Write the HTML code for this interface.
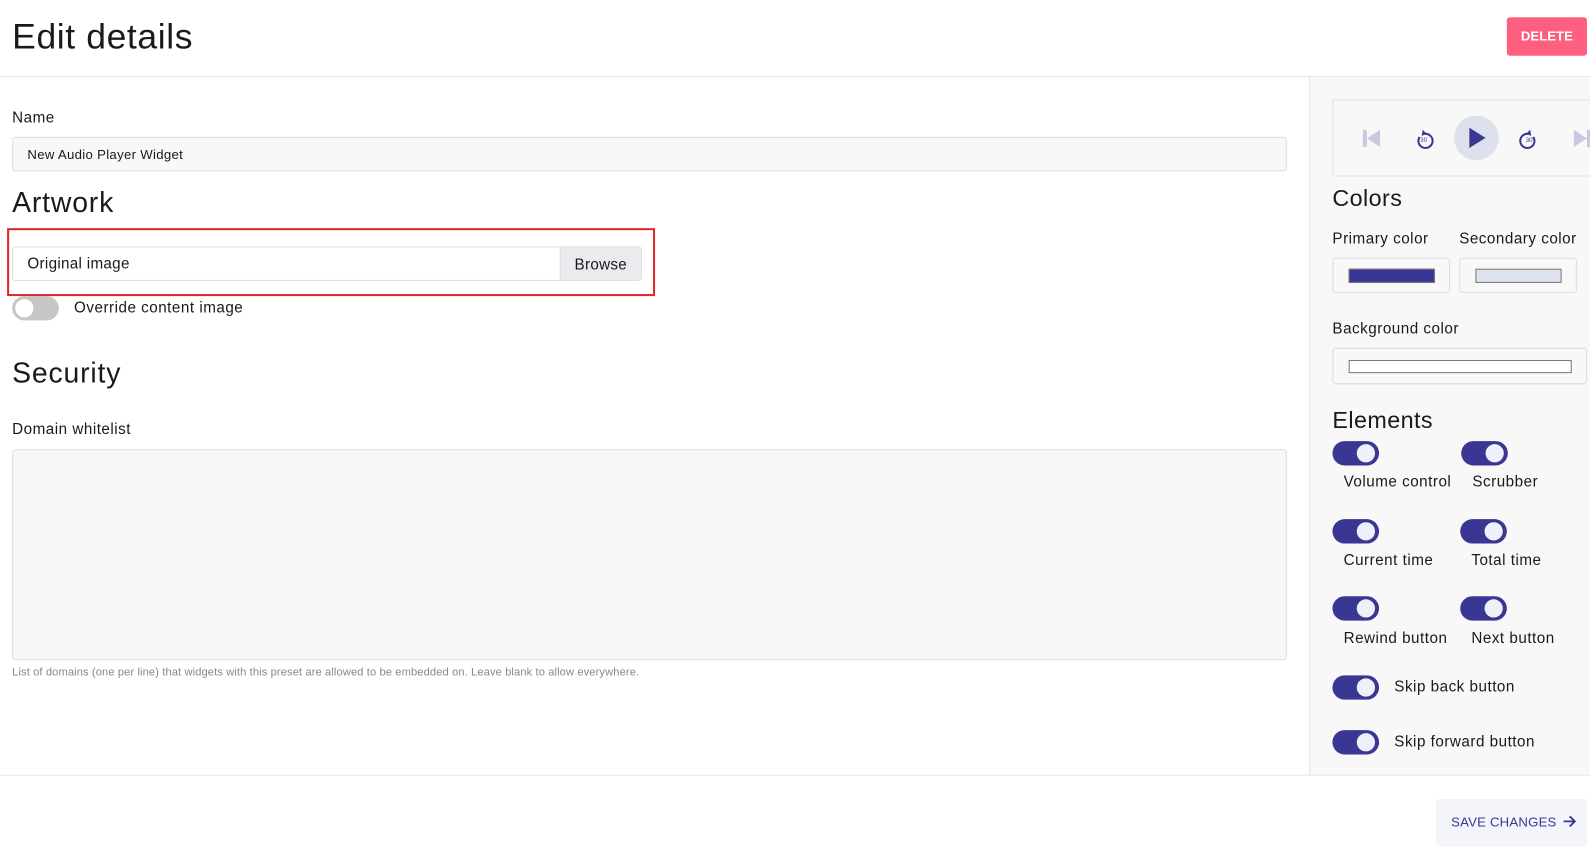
<!DOCTYPE html>
<html><head><style>
*{box-sizing:border-box;margin:0;padding:0}
html,body{width:1590px;height:847px;overflow:hidden;background:#fff}
#w{position:absolute;left:0;top:0;width:1568px;height:836px;transform:scale(1.01403);transform-origin:0 0;font-family:"Liberation Sans",sans-serif;color:#1a1a1a}
.a{position:absolute}
h1{position:absolute;left:12px;top:17px;font-size:35px;font-weight:normal;letter-spacing:0.6px}
.lbl{font-size:15px;letter-spacing:0.5px}
.h2{font-size:28px;letter-spacing:0.8px}
.inp{border:1px solid #dcdcdc;border-radius:3px;background:#f8f8f8}
.tg{position:absolute;width:46px;height:24px;border-radius:12px;background:#3a3694}
.tg::after{content:"";position:absolute;right:4px;top:3px;width:18px;height:18px;border-radius:50%;background:#eef0fa}
.el{position:absolute;font-size:15px;letter-spacing:0.5px}
</style></head><body><div id="w">
<h1>Edit details</h1>
<div class="a" style="left:1486px;top:17px;width:79px;height:38px;background:#fe5f7e;border-radius:3px;color:#fff;font-size:13px;font-weight:bold;line-height:38px;text-align:center">DELETE</div>
<div class="a" style="left:0;top:75px;width:1568px;height:1px;background:#e6e6e6"></div>
<div class="a" style="left:1291px;top:76px;width:277px;height:688px;background:#f8f8f8;border-left:1px solid #e6e6e6"></div>
<div class="a" style="left:0;top:764px;width:1568px;height:1px;background:#e6e6e6"></div>

<div class="a lbl" style="left:12px;top:108px">Name</div>
<div class="a inp" style="left:12px;top:135px;width:1257px;height:34px;font-size:13px;line-height:34px;padding-left:14px;letter-spacing:0.3px">New Audio Player Widget</div>
<div class="a h2" style="left:12px;top:184px">Artwork</div>
<div class="a" style="left:7px;top:225px;width:639px;height:67px;border:2px solid #e0262b"></div>
<div class="a" style="left:12px;top:243px;width:621px;height:34px;border:1px solid #dcdcdc;border-radius:3px;background:#fff;font-size:15px;line-height:34px;padding-left:14px;letter-spacing:0.3px">Original image
<div class="a" style="right:0;top:0;width:80px;height:32px;background:#e9ebee;border-left:1px solid #dcdcdc;text-align:center;line-height:36px">Browse</div></div>
<div class="a" style="left:12px;top:292px;width:46px;height:24px;border-radius:12px;background:#c6c6c6"><div class="a" style="left:3px;top:3px;width:18px;height:18px;border-radius:50%;background:#fff"></div></div>
<div class="a lbl" style="left:73px;top:295px">Override content image</div>
<div class="a h2" style="left:12px;top:352px">Security</div>
<div class="a lbl" style="left:12px;top:415px">Domain whitelist</div>
<div class="a inp" style="left:12px;top:443px;width:1257px;height:208px"></div>
<div class="a" style="left:12px;top:657px;font-size:11px;color:#888;letter-spacing:0.1px">List of domains (one per line) that widgets with this preset are allowed to be embedded on. Leave blank to allow everywhere.</div>

<div class="a" style="left:1314px;top:98px;width:260px;height:76px;border:1px solid #dedfee;overflow:hidden">
<svg width="260" height="76" style="position:absolute;left:0;top:0">
<rect x="29" y="29" width="4" height="17" fill="#c8c8e2"/><path d="M46 29 L33 37.5 L46 46Z" fill="#c8c8e2"/>
<path d="M85 36 a7 7 0 1 0 5 -3" fill="none" stroke="#3a3694" stroke-width="2"/><path d="M88 29 l4 4 -5 2z" fill="#3a3694"/>
<text x="89" y="41" font-size="6" fill="#3a3694" text-anchor="middle" font-family="Liberation Sans">30</text>
<circle cx="141" cy="37" r="22" fill="#dde1ec"/><path d="M134 27 L150 37 L134 47Z" fill="#3a3694"/>
<path d="M197 36 a7 7 0 1 1 -5 -3" fill="none" stroke="#3a3694" stroke-width="2"/><path d="M194 29 l-4 4 5 2z" fill="#3a3694"/>
<text x="193" y="41" font-size="6" fill="#3a3694" text-anchor="middle" font-family="Liberation Sans">30</text>
<path d="M237 29 L250 37.5 L237 46Z" fill="#c8c8e2"/><rect x="250" y="29" width="4" height="17" fill="#c8c8e2"/>
</svg></div>
<div class="a" style="left:1314px;top:182px;font-size:23px;letter-spacing:0.4px">Colors</div>
<div class="a lbl" style="left:1314px;top:227px">Primary color</div>
<div class="a lbl" style="left:1439px;top:227px">Secondary color</div>
<div class="a" style="left:1314px;top:254px;width:116px;height:35px;border:1px solid #dcdcdc;border-radius:3px;background:#f8f8f8"><div class="a" style="left:15px;top:10px;width:85px;height:14px;background:#3a3694;border:1px solid #777"></div></div>
<div class="a" style="left:1439px;top:254px;width:116px;height:35px;border:1px solid #dcdcdc;border-radius:3px;background:#f8f8f8"><div class="a" style="left:15px;top:10px;width:85px;height:14px;background:#dee2ec;border:1px solid #777"></div></div>
<div class="a lbl" style="left:1314px;top:316px">Background color</div>
<div class="a" style="left:1314px;top:343px;width:251px;height:36px;border:1px solid #dcdcdc;border-radius:3px;background:#f8f8f8"><div class="a" style="left:15px;top:11px;width:220px;height:13px;background:#fff;border:1px solid #777"></div></div>
<div class="a" style="left:1314px;top:401px;font-size:23px;letter-spacing:0.4px">Elements</div>
<div class="tg" style="left:1314px;top:435px"></div><div class="tg" style="left:1441px;top:435px"></div>
<div class="el" style="left:1325px;top:467px">Volume control</div><div class="el" style="left:1452px;top:467px">Scrubber</div>
<div class="tg" style="left:1314px;top:512px"></div><div class="tg" style="left:1440px;top:512px"></div>
<div class="el" style="left:1325px;top:544px">Current time</div><div class="el" style="left:1451px;top:544px">Total time</div>
<div class="tg" style="left:1314px;top:588px"></div><div class="tg" style="left:1440px;top:588px"></div>
<div class="el" style="left:1325px;top:621px">Rewind button</div><div class="el" style="left:1451px;top:621px">Next button</div>
<div class="tg" style="left:1314px;top:666px"></div><div class="el" style="left:1375px;top:669px">Skip back button</div>
<div class="tg" style="left:1314px;top:720px"></div><div class="el" style="left:1375px;top:723px">Skip forward button</div>

<div class="a" style="left:1416px;top:788px;width:149px;height:47px;background:#f4f5fa;border-radius:3px;color:#3a3694;font-size:13px;line-height:45px;padding-left:15px;letter-spacing:0.2px">SAVE CHANGES <svg width="14" height="12" style="vertical-align:-1px;margin-left:2px"><path d="M1 6h11M7 1l5 5-5 5" fill="none" stroke="#3a3694" stroke-width="1.8"/></svg></div>
</div></body></html>
